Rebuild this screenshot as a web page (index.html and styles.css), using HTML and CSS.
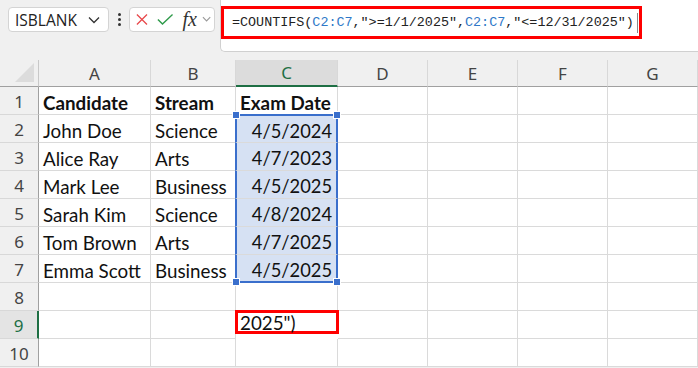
FILE: index.html
```html
<!DOCTYPE html>
<html lang="en">
<head>
<meta charset="UTF-8">
<title>COUNTIFS</title>
<link rel="stylesheet" href="styles.css">
</head>
<body>
<div class="toolbar">
    <div class="name-box">
        <span>ISBLANK</span>
        <svg width="12" height="8" viewBox="0 0 12 8"><path d="M1 1.5 L6 6.5 L11 1.5" fill="none" stroke="#333" stroke-width="1.3"/></svg>
    </div>
    <div class="dots"><i></i><i></i><i></i></div>
    <div class="fx-box">
        <svg width="13" height="13" viewBox="0 0 13 13"><path d="M1 1 L12 12 M12 1 L1 12" stroke="#e8484b" stroke-width="1.4"/></svg>
        <svg width="18" height="13" viewBox="0 0 18 13"><path d="M1 6.5 L6 11.5 L17 1" fill="none" stroke="#2e9a4a" stroke-width="1.6"/></svg>
        <span class="fx"><i>fx</i></span>
        <svg width="10" height="7" viewBox="0 0 10 7"><path d="M1 1 L5 5 L9 1" fill="none" stroke="#999" stroke-width="1.2"/></svg>
    </div>
    <div class="formula-bar">
        <div class="formula">=COUNTIFS(<span class="ref">C2:C7</span>,"&gt;=1/1/2025",<span class="ref">C2:C7</span>,"&lt;=12/31/2025")<span class="caret"></span></div>
    </div>
</div>

<div class="sheet">
    <div class="corner"></div>
    <div class="col-head">A</div>
    <div class="col-head">B</div>
    <div class="col-head active">C</div>
    <div class="col-head">D</div>
    <div class="col-head">E</div>
    <div class="col-head">F</div>
    <div class="col-head">G</div>

    <div class="row-head">1</div>
    <div class="cell bold">Candidate</div><div class="cell bold">Stream</div><div class="cell bold">Exam Date</div>
    <div class="cell"></div><div class="cell"></div><div class="cell"></div><div class="cell"></div>

    <div class="row-head">2</div>
    <div class="cell">John Doe</div><div class="cell">Science</div><div class="cell sel sel-top num">4/5/2024</div>
    <div class="cell"></div><div class="cell"></div><div class="cell"></div><div class="cell"></div>

    <div class="row-head">3</div>
    <div class="cell">Alice Ray</div><div class="cell">Arts</div><div class="cell sel num">4/7/2023</div>
    <div class="cell"></div><div class="cell"></div><div class="cell"></div><div class="cell"></div>

    <div class="row-head">4</div>
    <div class="cell">Mark Lee</div><div class="cell">Business</div><div class="cell sel num">4/5/2025</div>
    <div class="cell"></div><div class="cell"></div><div class="cell"></div><div class="cell"></div>

    <div class="row-head">5</div>
    <div class="cell">Sarah Kim</div><div class="cell">Science</div><div class="cell sel num">4/8/2024</div>
    <div class="cell"></div><div class="cell"></div><div class="cell"></div><div class="cell"></div>

    <div class="row-head">6</div>
    <div class="cell">Tom Brown</div><div class="cell">Arts</div><div class="cell sel num">4/7/2025</div>
    <div class="cell"></div><div class="cell"></div><div class="cell"></div><div class="cell"></div>

    <div class="row-head">7</div>
    <div class="cell">Emma Scott</div><div class="cell">Business</div><div class="cell sel sel-bottom num">4/5/2025</div>
    <div class="cell"></div><div class="cell"></div><div class="cell"></div><div class="cell"></div>

    <div class="row-head">8</div>
    <div class="cell"></div><div class="cell"></div><div class="cell"></div>
    <div class="cell"></div><div class="cell"></div><div class="cell"></div><div class="cell"></div>

    <div class="row-head active">9</div>
    <div class="cell"></div><div class="cell"></div><div class="cell edit">2025")</div>
    <div class="cell"></div><div class="cell"></div><div class="cell"></div><div class="cell"></div>

    <div class="row-head">10</div>
    <div class="cell"></div><div class="cell"></div><div class="cell"></div>
    <div class="cell"></div><div class="cell"></div><div class="cell"></div><div class="cell"></div>
</div>
</body>
</html>
```

FILE: styles.css
```css
body {
    margin: 0;
    width: 698px;
    height: 368px;
    overflow: hidden;
    background-color: #f0f0f0;
    font-family: "Open Sans", "Liberation Sans", sans-serif;
}

.toolbar {
    display: flex;
    align-items: flex-start;
    height: 60px;
}

.name-box {
    display: flex;
    align-items: center;
    justify-content: space-between;
    box-sizing: border-box;
    width: 101px;
    height: 25px;
    margin: 7px 0 0 8px;
    padding: 0 8px 0 6px;
    background-color: #fff;
    border: 1px solid #d4d4d4;
    border-radius: 4px;
    font-size: 15.5px;
    color: #222;
}

.dots {
    display: flex;
    flex-direction: column;
    gap: 2px;
    margin: 13px 8px 0 9px;
}

.dots i {
    width: 3px;
    height: 3px;
    background-color: #333;
    border-radius: 50%;
}

.fx-box {
    display: flex;
    align-items: center;
    gap: 9px;
    box-sizing: border-box;
    width: 86px;
    height: 25px;
    margin-top: 7px;
    padding: 0 3px 0 6px;
    background-color: #fff;
    border: 1px solid #d4d4d4;
    border-radius: 4px;
}

.fx {
    font-family: "Liberation Serif", serif;
    font-size: 20px;
    color: #333;
    margin-right: -4px;
}

.formula-bar {
    flex: 1;
    height: 52px;
    margin-left: 5px;
    box-sizing: border-box;
    padding-top: 6px;
    background-color: #fff;
    border-left: 1px solid #d0d0d0;
    border-bottom: 1px solid #d0d0d0;
    border-bottom-left-radius: 5px;
}

.formula {
    display: flex;
    align-items: center;
    box-sizing: border-box;
    width: 421px;
    height: 33px;
    padding-left: 8px;
    border: 3px solid #f00;
    font-family: "Liberation Mono", monospace;
    font-size: 13.4px;
    color: #222;
    white-space: pre;
}

.formula .ref {
    color: #2f78c8;
}

.caret {
    width: 1px;
    height: 20px;
    margin-left: 3px;
    background-color: #888;
}

.sheet {
    display: grid;
    grid-template-columns: 39px 112px 85px 102px 90px 90px 90px 90px;
    grid-template-rows: 27px repeat(10, 28px);
    background-color: #fff;
}

.corner {
    position: relative;
    background-color: #f0f0f0;
    border-right: 1px solid #c8c8c8;
    border-bottom: 1px solid #a0a0a0;
}

.corner::after {
    content: "";
    position: absolute;
    right: 4px;
    bottom: 4px;
    border-left: 19px solid transparent;
    border-bottom: 19px solid #dcdcdc;
}

.col-head {
    display: flex;
    align-items: center;
    justify-content: center;
    background-color: #f0f0f0;
    border-right: 1px solid #d8d8d8;
    border-bottom: 1px solid #a0a0a0;
    font-family: "Noto Sans", sans-serif;
    font-size: 17px;
    color: #444;
}

.col-head.active {
    background-color: #dcdcdc;
    color: #1e6f44;
    border-bottom: 2px solid #1e6f44;
}

.row-head {
    display: flex;
    align-items: center;
    justify-content: center;
    padding-top: 2px;
    background-color: #f0f0f0;
    border-right: 1px solid #a0a0a0;
    border-bottom: 1px solid #d8d8d8;
    font-family: "Noto Sans", sans-serif;
    font-size: 17px;
    color: #444;
}

.row-head.active {
    background-color: #e4e4e4;
    color: #1e6f44;
    border-right: 2px solid #1e6f44;
}

.cell {
    display: flex;
    align-items: center;
    padding: 3px 4px 0;
    border-right: 1px solid #dadada;
    border-bottom: 1px solid #dadada;
    font-family: Lato, "Liberation Sans", sans-serif;
    font-size: 18.8px;
    color: #111;
    white-space: nowrap;
    overflow: visible;
}

.cell.bold {
    font-weight: bold;
}

.cell.num {
    justify-content: flex-end;
    font-size: 18.3px;
}

.cell.sel {
    position: relative;
    background-color: #d6e1f3;
    border-left: 2px solid #3a6fcc;
    border-right: 2px solid #3a6fcc;
    margin-left: -1px;
}

.cell.sel-top {
    border-top: 2px solid #3a6fcc;
    margin-top: -1px;
}

.cell.sel-bottom {
    border-bottom: 2px solid #3a6fcc;
}

.cell.sel-top::before,
.cell.sel-top::after,
.cell.sel-bottom::before,
.cell.sel-bottom::after {
    content: "";
    position: absolute;
    width: 6px;
    height: 6px;
    background-color: #3a6fcc;
    border: 1px solid #fff;
}

.cell.sel-top::before { left: -5px; top: -5px; }
.cell.sel-top::after { right: -5px; top: -5px; }
.cell.sel-bottom::before { left: -5px; bottom: -5px; }
.cell.sel-bottom::after { right: -5px; bottom: -5px; }

.cell.edit {
    position: relative;
    box-sizing: border-box;
    height: 24px;
    margin: -1px -1px 0 -1px;
    border: 3px solid #f00;
    padding: 0 0 0 2px;
}
```
